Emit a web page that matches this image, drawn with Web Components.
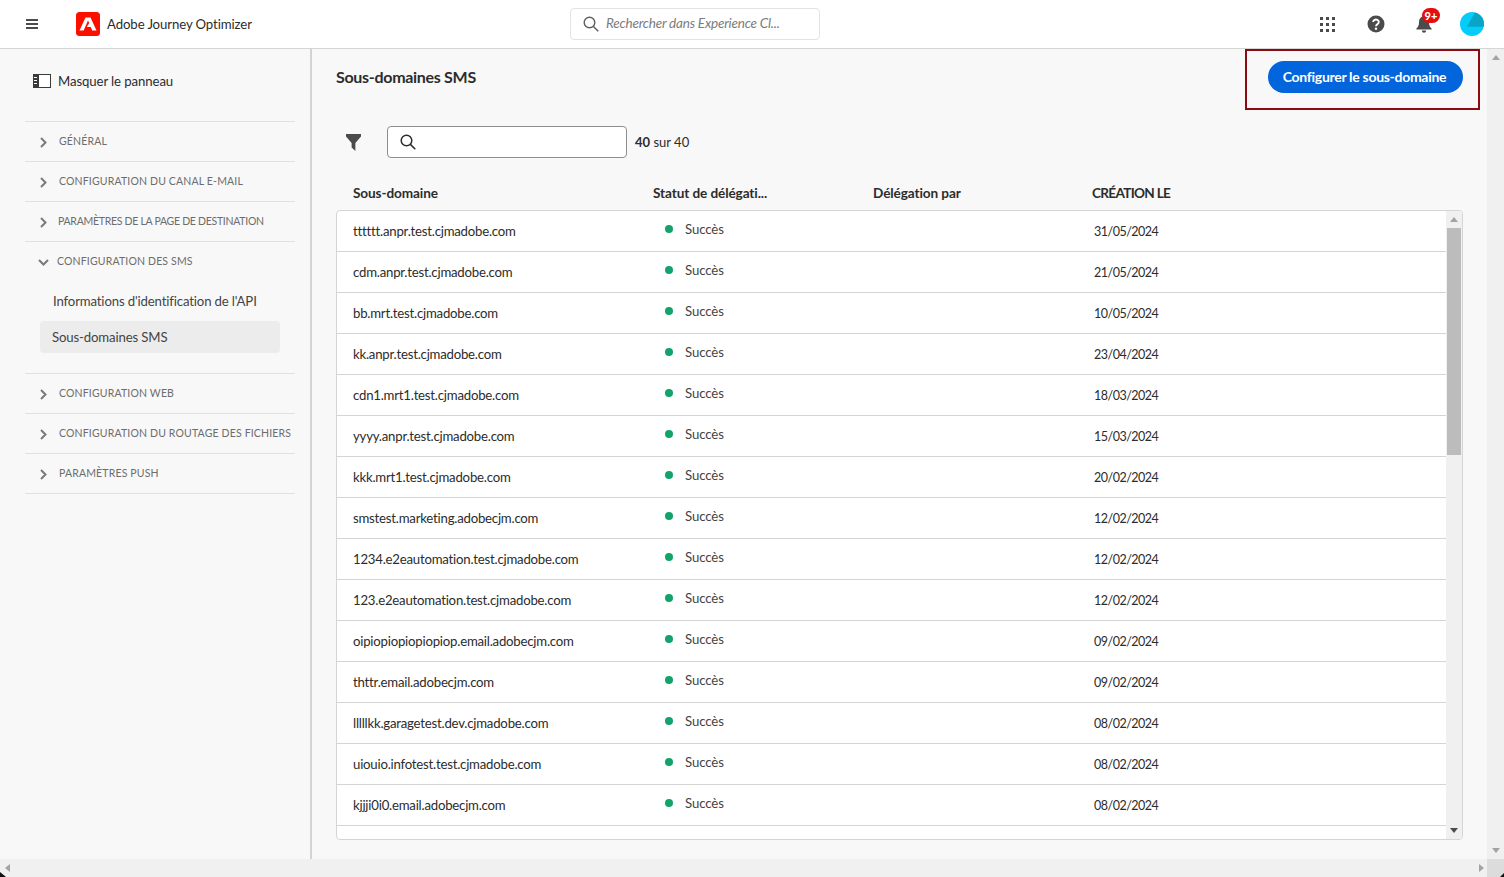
<!doctype html>
<html lang="fr">
<head>
<meta charset="utf-8">
<title>Sous-domaines SMS</title>
<style>
  html, body { margin: 0; height: 100%; overflow: hidden; }
  body { font-family: Lato, "Liberation Sans", sans-serif; font-size: 13.2px; color: #2c2c2c; background: #f8f8f8; }
</style>
</head>
<body>
<ajo-app></ajo-app>
<script>
  const rows = [
    ["tttttt.anpr.test.cjmadobe.com", "31/05/2024"],
    ["cdm.anpr.test.cjmadobe.com", "21/05/2024"],
    ["bb.mrt.test.cjmadobe.com", "10/05/2024"],
    ["kk.anpr.test.cjmadobe.com", "23/04/2024"],
    ["cdn1.mrt1.test.cjmadobe.com", "18/03/2024"],
    ["yyyy.anpr.test.cjmadobe.com", "15/03/2024"],
    ["kkk.mrt1.test.cjmadobe.com", "20/02/2024"],
    ["smstest.marketing.adobecjm.com", "12/02/2024"],
    ["1234.e2eautomation.test.cjmadobe.com", "12/02/2024"],
    ["123.e2eautomation.test.cjmadobe.com", "12/02/2024"],
    ["oipiopiopiopiopiop.email.adobecjm.com", "09/02/2024"],
    ["thttr.email.adobecjm.com", "09/02/2024"],
    ["lllllkk.garagetest.dev.cjmadobe.com", "08/02/2024"],
    ["uiouio.infotest.test.cjmadobe.com", "08/02/2024"],
    ["kjjji0i0.email.adobecjm.com", "08/02/2024"],
    ["", ""],
  ]

  class Base extends HTMLElement {
    constructor(...args) {
      super(...args)
      this.root = this.attachShadow({ mode: "open" })
    }
  }

  class TopBar extends Base {
    connectedCallback() {
      this.root.innerHTML = `
      <style>
      :host { display: flex; align-items: center; height: 48px; background: #fff; border-bottom: 1px solid #d5d5d5; color: #2c2c2c; }
      svg { display: block; flex: none; }
      .burger { margin-left: 26px; }
      .logo { margin-left: 38px; }
      .title { margin-left: 7px; padding-bottom: 1px; width: 200px; letter-spacing: -.1px; }
      .search { box-sizing: border-box; display: flex; align-items: center; width: 250px; height: 32px; margin-left: 263px; padding-left: 12px; background: #fff; border: 1px solid #e3e3e3; border-radius: 4px; color: #7c7c7c; font-style: italic; font-size: 13.5px; letter-spacing: -.2px; }
      .search svg { margin-right: 7px; }
      .search span { padding-bottom: 2px; }
      .icons { display: flex; align-items: center; margin-left: auto; margin-right: 20px; }
      .bell { position: relative; margin-left: 31px; }
      .badge { position: absolute; left: 6px; top: -7px; width: 18px; height: 15px; border-radius: 8px; background: #e60d0d; color: #fff; font-size: 11px; font-weight: 900; line-height: 15px; text-align: center; }
      </style>
      <svg class="burger" width="12" height="10" viewBox="0 0 12 10" fill="#4b4b4b"><rect width="12" height="2"/><rect y="4" width="12" height="2"/><rect y="8" width="12" height="2"/></svg>
      <svg class="logo" width="24" height="24" viewBox="0 0 24 24"><rect width="24" height="24" rx="3.5" fill="#fa0f00"/><path fill="#fff" d="M9.5 5.5H14.5L20.5 18.5H16.2L14.8 15H10.8L13.2 11L12 8.6L7.6 18.5H3.5z"/></svg>
      <span class="title">Adobe Journey Optimizer</span>
      <div class="search">
        <svg width="16" height="16" viewBox="0 0 16 16" fill="none" stroke="#5e5e5e" stroke-width="1.4"><circle cx="6.5" cy="6.5" r="5.3"/><path d="M10.4 10.4L15.3 15.3"/></svg>
        <span>Rechercher dans Experience Cl...</span>
      </div>
      <div class="icons">
        <svg width="15" height="15" viewBox="0 0 15 15" fill="#4b4b4b"><rect width="3" height="3"/><rect x="6" width="3" height="3"/><rect x="12" width="3" height="3"/><rect y="6" width="3" height="3"/><rect x="6" y="6" width="3" height="3"/><rect x="12" y="6" width="3" height="3"/><rect y="12" width="3" height="3"/><rect x="6" y="12" width="3" height="3"/><rect x="12" y="12" width="3" height="3"/></svg>
        <svg style="margin-left:32px" width="18" height="18" viewBox="0 0 18 18"><circle cx="9" cy="9" r="8.5" fill="#4b4b4b"/><path d="M6.2 7a2.8 2.5 0 1 1 4.3 2.1c-1 .7-1.5 1.1-1.5 2.1" fill="none" stroke="#fff" stroke-width="1.9"/><circle cx="9" cy="13.8" r="1.2" fill="#fff"/></svg>
        <div class="bell">
          <svg width="16" height="18" viewBox="0 0 16 18" fill="#4b4b4b"><path d="M8 0a1.3 1.3 0 0 1 1.3 1.5C12 2.2 13 4.6 13 7.2c0 3 .8 4.8 2.6 6.3v1H.4v-1C2.2 12 3 10.2 3 7.2 3 4.6 4 2.2 6.7 1.5A1.3 1.3 0 0 1 8 0z"/><path d="M5.8 15.5h4.4a2.2 2.2 0 0 1-4.400 0z"/></svg>
          <span class="badge">9+</span>
        </div>
        <svg style="margin-left:28px" width="24" height="24" viewBox="0 0 24 24"><circle cx="12" cy="12" r="12" fill="#05cdfb"/><path d="M15 .4L6.7 14.7H23.700A12 12 0 0 0 15 .4z" fill="#08a5c6"/></svg>
      </div>`
    }
  }

  class NavSection extends Base {
    connectedCallback() {
      const open = this.hasAttribute("open")
      const chevron = open ? "M1 1l4.5 4.5L10 1" : "M1 1l4.5 4.5L1 10"
      const size = open ? [11, 7] : [7, 11]
      this.root.innerHTML = `
      <style>
      :host { display: block; border-bottom: 1px solid #e1e1e1; }
      .head { display: flex; align-items: center; box-sizing: border-box; height: 39px; padding-left: var(--chevron-x, 15px); color: #6d6d6d; font-size: 10.5px; letter-spacing: var(--label-spacing, .16px); text-transform: uppercase; }
      svg { flex: none; margin-top: 1px; }
      .label { margin-left: var(--label-gap, 12px); padding-bottom: 1px; white-space: nowrap; }
      .items { padding: 4px 15px 16px; }
      </style>
      <div class="head">
        <svg width="${size[0]}" height="${size[1]}" viewBox="0 0 ${size[0]} ${size[1]}" fill="none" stroke="#7a7a7a" stroke-width="2"><path d="${chevron}"/></svg>
        <span class="label">${this.getAttribute("label")}</span>
      </div>
      ${open ? `<div class="items"><slot></slot></div>` : ""}`
    }
  }

  class NavItem extends Base {
    connectedCallback() {
      this.root.innerHTML = `
      <style>
      :host { display: flex; align-items: center; height: 32px; margin-bottom: 4px; padding-left: 13px; border-radius: 4px; color: #444; letter-spacing: -.15px; }
      :host([selected]) { padding-left: 12px; background: #ececec; }
      </style>
      <slot></slot>`
    }
  }

  class SideNav extends Base {
    connectedCallback() {
      this.root.innerHTML = `
      <style>
      :host { display: block; box-sizing: border-box; width: 312px; padding: 0 15px 0 25px; border-right: 2px solid #d3d3d3; background: #f8f8f8; }
      .hide { display: flex; align-items: center; box-sizing: border-box; height: 72px; padding: 0 0 9px 8px; color: #2c2c2c; letter-spacing: -.1px; }
      svg { margin-right: 7px; }
      .list { border-top: 1px solid #e1e1e1; }
      </style>
      <div class="hide">
        <svg width="18" height="14" viewBox="0 0 18 14"><rect x=".5" y=".5" width="17" height="13" fill="#fff" stroke="#3a3a3a"/><rect width="6" height="14" fill="#3a3a3a"/><path d="M1 3.500h3M1 6.500h3M1 9.500h3" stroke="#fff"/></svg>
        <span>Masquer le panneau</span>
      </div>
      <div class="list">
        <nav-section label="Général"></nav-section>
        <nav-section label="Configuration du canal e-mail"></nav-section>
        <nav-section label="Paramètres de la page de destination" style="--label-gap:11px;--label-spacing:-.28px"></nav-section>
        <nav-section label="Configuration des SMS" style="--chevron-x:13px;--label-gap:8px" open>
          <nav-item>Informations d'identification de l'API</nav-item>
          <nav-item selected>Sous-domaines SMS</nav-item>
        </nav-section>
        <nav-section label="Configuration Web"></nav-section>
        <nav-section label="Configuration du routage des fichiers"></nav-section>
        <nav-section label="Paramètres push"></nav-section>
      </div>`
    }
  }

  class TableRow extends Base {
    connectedCallback() {
      const name = this.getAttribute("name")
      this.root.innerHTML = `
      <style>
      :host { display: grid; grid-template-columns: 300px 220px 220px 1fr; flex: none; box-sizing: border-box; height: 41px; padding-left: 16px; align-items: center; border-bottom: 1px solid #d5d5d5; color: #2c2c2c; letter-spacing: -.22px; }
      .status { display: flex; align-items: center; position: relative; top: -2px; color: #444; letter-spacing: -.1px; }
      .dot { width: 8px; height: 8px; margin: 0 12px 0 12px; border-radius: 50%; background: #12a26c; }
      .date { padding-left: 1px; font-size: 12.5px; letter-spacing: -.5px; }
      </style>
      <span>${name}</span>
      ${name ? `<span class="status"><i class="dot"></i>Succès</span>` : "<span></span>"}
      <span></span>
      <span class="date">${this.getAttribute("date")}</span>`
    }
  }

  class ScrollTrack extends Base {
    connectedCallback() {
      this.root.innerHTML = `
      <style>
      :host { display: flex; flex-direction: column; align-items: center; flex: none; width: 16px; background: #f0f0f0; }
      .up, .down { width: 0; height: 0; flex: none; border: 4px solid transparent; }
      .up { margin-top: 6px; border-top: 0; border-bottom: 5px solid var(--arrow, #a3a3a3); }
      .down { margin-top: auto; margin-bottom: 6px; border-bottom: 0; border-top: 5px solid var(--arrow, #4d4d4d); }
      .thumb { flex: none; width: 14px; height: 227px; margin-top: 6px; background: #bcbcbc; }
      </style>
      <i class="up"></i>
      ${this.hasAttribute("thumb") ? `<i class="thumb"></i>` : ""}
      <i class="down"></i>`
    }
  }

  class SubdomainTable extends Base {
    connectedCallback() {
      this.root.innerHTML = `
      <style>
      :host { display: flex; flex-direction: column; flex: 1; min-height: 0; }
      .cols { display: grid; grid-template-columns: 300px 220px 219px 1fr; flex: none; box-sizing: border-box; height: 33px; padding: 0 0 2px 17px; align-items: center; font-size: 13.6px; font-weight: 700; letter-spacing: -.1px; color: #2c2c2c; }
      .cols .wide { letter-spacing: -.7px; }
      .box { display: flex; height: 630px; box-sizing: border-box; overflow: hidden; background: #fff; border: 1px solid #d5d5d5; border-radius: 4px; }
      .rows { display: flex; flex-direction: column; flex: 1; min-width: 0; overflow: hidden; }
      </style>
      <div class="cols">
        <span>Sous-domaine</span>
        <span>Statut de délégati...</span>
        <span>Délégation par</span>
        <span class="wide">CRÉATION LE</span>
      </div>
      <div class="box">
        <div class="rows">
          ${rows.map(([name, date]) => `<table-row name="${name}" date="${date}"></table-row>`).join("")}
        </div>
        <scroll-track thumb></scroll-track>
      </div>`
    }
  }

  class PageContent extends Base {
    connectedCallback() {
      this.root.innerHTML = `
      <style>
      :host { display: flex; flex-direction: column; flex: 1; min-width: 0; position: relative; box-sizing: border-box; padding: 0 24px 19px; background: #f8f8f8; }
      .head { display: flex; align-items: center; justify-content: space-between; flex: none; height: 61px; }
      h1 { margin: 0; padding-bottom: 6px; font-size: 16px; font-weight: 700; color: #2c2c2c; letter-spacing: -.3px; }
      button { width: 195px; height: 32px; margin: 0 0 5px; padding: 0 2px 2px 0; border: 0; border-radius: 16px; background: #0265dc; color: #fff; font: 700 14px Lato, "Liberation Sans", sans-serif; letter-spacing: -.3px; }
      .mark { position: absolute; top: 0; right: 7px; box-sizing: border-box; width: 235px; height: 61px; border: 2px solid #8b0b12; pointer-events: none; }
      .tools { display: flex; align-items: center; flex: none; height: 32px; margin-top: 16px; padding-left: 10px; }
      .field { box-sizing: border-box; display: flex; align-items: center; width: 240px; height: 32px; margin-left: 26px; padding-left: 12px; background: #fff; border: 1px solid #8e8e8e; border-radius: 4px; }
      .count { margin-left: 8px; font-size: 13px; color: #2c2c2c; }
      b { font-weight: 700; }
      </style>
      <div class="head">
        <h1>Sous-domaines SMS</h1>
        <button>Configurer le sous-domaine</button>
      </div>
      <div class="mark"></div>
      <div class="tools">
        <svg width="15" height="17" viewBox="0 0 16 17" preserveAspectRatio="none" fill="#4b4b4b"><path d="M0 0h16v2.5L10 9v8l-4-3.5V9L0 2.5z"/></svg>
        <div class="field">
          <svg width="16" height="16" viewBox="0 0 16 16" fill="none" stroke="#2c2c2c" stroke-width="1.5"><circle cx="6.5" cy="6.5" r="5.3"/><path d="M10.4 10.4L15.3 15.3"/></svg>
        </div>
        <span class="count"><b>40</b> sur 40</span>
      </div>
      <subdomain-table style="margin-top:19px"></subdomain-table>`
    }
  }

  class BottomBar extends Base {
    connectedCallback() {
      this.root.innerHTML = `
      <style>
      :host { display: flex; align-items: center; flex: none; height: 18px; position: relative; background: #f0f0f0; }
      i { width: 0; height: 0; flex: none; border: 4px solid transparent; }
      .left { margin-left: 5px; border-left: 0; border-right: 5px solid #a3a3a3; }
      .right { margin-left: auto; margin-right: 3px; border-right: 0; border-left: 5px solid #a3a3a3; }
      .corner { align-self: stretch; width: 17px; background: #dcdcdc; }
      .nick { position: absolute; bottom: 0; border: 0; width: 0; }
      .nick.a { left: 0; border-bottom: 5px solid #111; border-right: 6px solid transparent; }
      .nick.b { right: 0; border-bottom: 4px solid #111; border-left: 4px solid transparent; }
      </style>
      <i class="left"></i>
      <i class="right"></i>
      <div class="corner"></div>
      <i class="nick a"></i>
      <i class="nick b"></i>`
    }
  }

  class AjoApp extends Base {
    connectedCallback() {
      this.root.innerHTML = `
      <style>
      :host { display: flex; flex-direction: column; height: 100vh; }
      .body { display: flex; flex: 1; min-height: 0; }
      scroll-track { width: 17px; --arrow: #a3a3a3; }
      </style>
      <top-bar></top-bar>
      <div class="body">
        <side-nav></side-nav>
        <page-content></page-content>
        <scroll-track></scroll-track>
      </div>
      <bottom-bar></bottom-bar>`
    }
  }

  customElements.define("top-bar", TopBar)
  customElements.define("nav-item", NavItem)
  customElements.define("nav-section", NavSection)
  customElements.define("side-nav", SideNav)
  customElements.define("table-row", TableRow)
  customElements.define("scroll-track", ScrollTrack)
  customElements.define("subdomain-table", SubdomainTable)
  customElements.define("page-content", PageContent)
  customElements.define("bottom-bar", BottomBar)
  customElements.define("ajo-app", AjoApp)
</script>
</body>
</html>
